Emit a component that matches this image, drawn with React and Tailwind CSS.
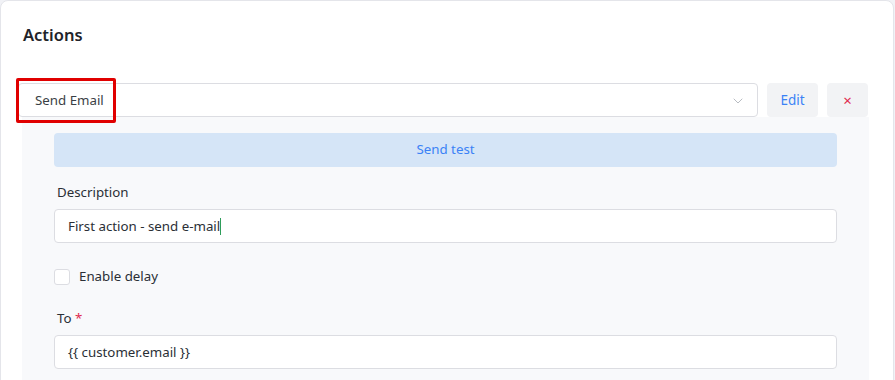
import React from "react";
import { ChevronDown } from "lucide-react";

const font = { fontFamily: '"Noto Sans", "Open Sans", sans-serif' };

const App = () => {
    return (
        <div className="w-[895px] h-[380px] bg-[#f1f2f6] overflow-hidden text-[#212529]" style={font}>
            <div className="w-[894px] h-[400px] bg-white border border-[#e4e5ea] rounded-lg">
                {/* Header */}
                <h2 className="pl-[22px] pt-[23px] text-[16.5px] leading-[22px] font-semibold text-[#1f2329]">Actions</h2>

                {/* Action select row */}
                <div className="flex items-center gap-[9px] pl-[17px] pr-[25px] mt-[37px]">
                    <div className="relative flex-1 h-[34px] flex items-center justify-between bg-white border border-[#dcdde2] rounded px-[16px] pt-[2px]">
                        <span className="text-[13.3px] text-[#3a3f45]">Send Email</span>
                        <ChevronDown className="w-4 h-4 text-[#b8bcc2] mr-[-5px]" strokeWidth={1.5} />
                        {/* annotation box */}
                        <div className="absolute left-[-3px] top-[-6px] w-[100px] h-[45px] border-[3px] border-[#e00000] rounded-[2px]" />
                    </div>
                    <button className="w-[51px] h-[34px] bg-[#f2f3f5] rounded text-[13.5px] text-[#3b82f6]">Edit</button>
                    <button className="w-[41px] h-[34px] bg-[#f2f3f5] rounded text-[15px] leading-none text-[#e0294d]">×</button>
                </div>

                {/* Action details panel */}
                <div className="ml-[21px] mr-[24px] bg-[#f8f9fb] px-8 pt-[16px] pb-6">
                    <button className="w-full h-[34px] bg-[#d5e5f7] rounded text-[13.3px] text-[#3b82f6]">Send test</button>

                    <label className="block mt-[15px] pl-[3px] text-[13.3px] leading-[21px] text-[#2a2f36]">Description</label>
                    <div className="mt-[6px] h-[34px] flex items-center bg-white border border-[#dcdde2] rounded px-[13px] pt-[1px] text-[13.3px] text-[#2a2f36]">
                        First action - send e-mail
                        <span className="inline-block w-px h-[17px] bg-[#2e9d5a]" />
                    </div>

                    <div className="flex items-center gap-[9px] mt-[23px] h-[21px]">
                        <span className="w-[16px] h-[16px] bg-white border border-[#dcdde2] rounded-[3px]" />
                        <span className="text-[13.3px] text-[#2a2f36]">Enable delay</span>
                    </div>

                    <label className="block mt-[21px] pl-[3px] text-[13.3px] leading-[21px] text-[#2a2f36]">
                        To <span className="text-[#e0294d]">*</span>
                    </label>
                    <div className="mt-[6px] h-[34px] flex items-center bg-white border border-[#dcdde2] rounded px-[13px] pt-[1px] text-[13.3px] text-[#2a2f36]">
                        {"{{ customer.email }}"}
                    </div>
                </div>
            </div>
        </div>
    );
};

export default App;
